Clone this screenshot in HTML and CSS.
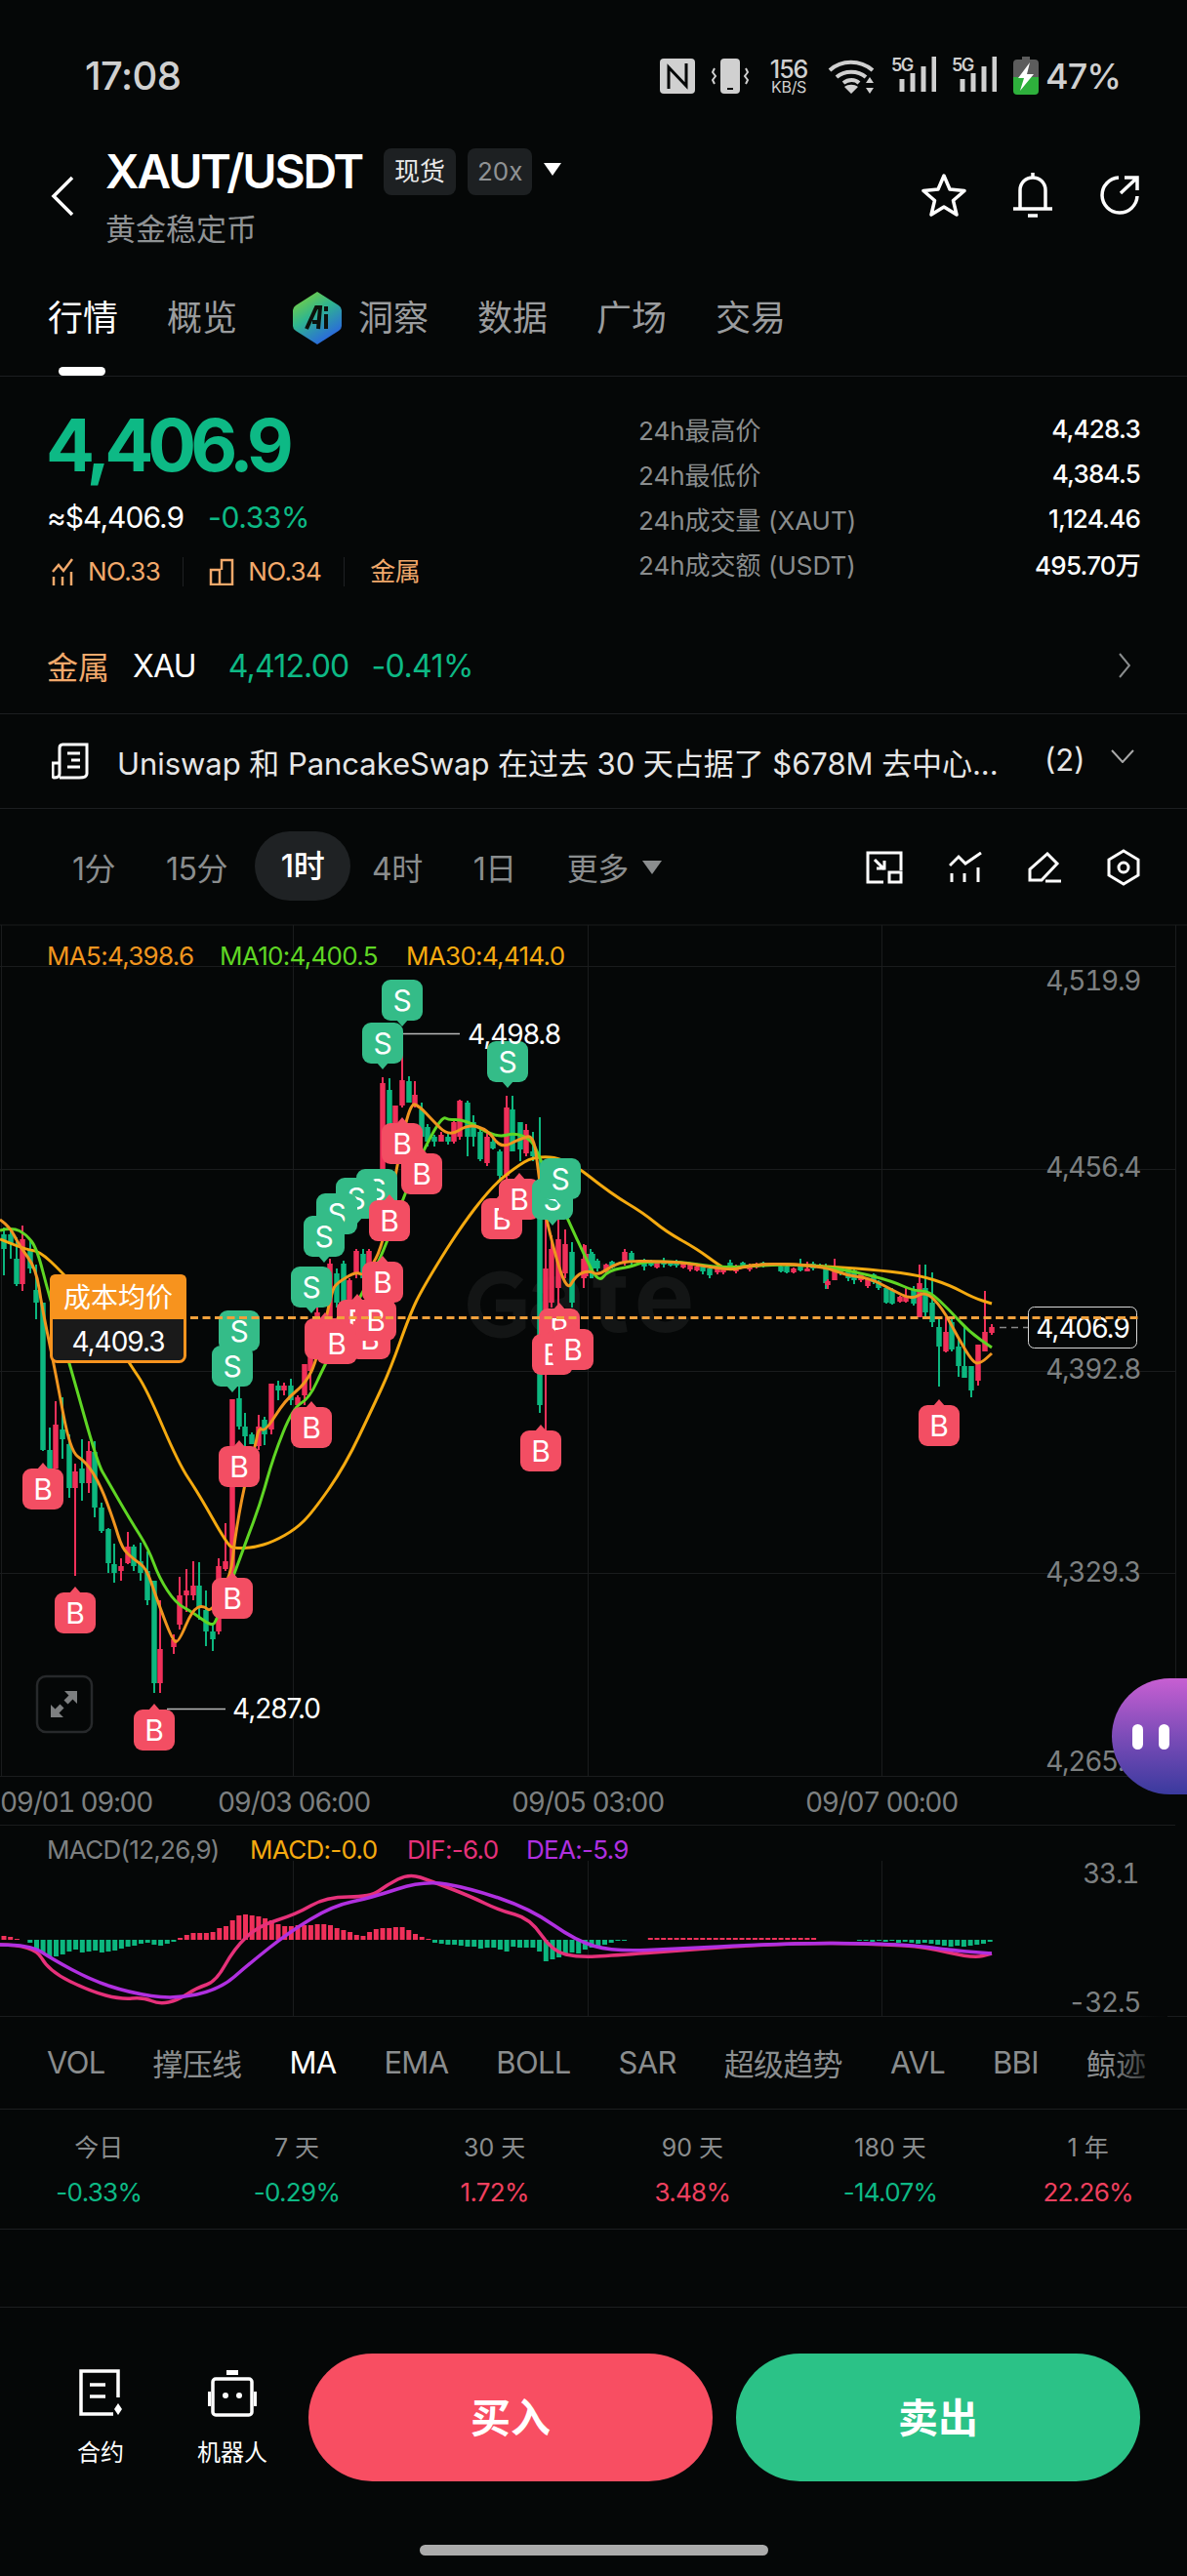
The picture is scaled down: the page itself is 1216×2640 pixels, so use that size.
FILE: index.html
```html
<!DOCTYPE html>
<html lang="zh">
<head>
    <meta charset="UTF-8">
    <title>XAUT/USDT</title>
    <link rel="stylesheet" href="styles.css">
</head>
<body>
<div class="page">

    <!-- status bar -->
    <div class="status">
        <span class="time">17:08</span>
        <div class="sys">
            <svg class="ic-nfc" width="36" height="36" viewBox="0 0 36 36"><rect width="36" height="36" rx="4" fill="#d0d0d0"/><path d="M9 31V9l18 19V5" fill="none" stroke="#050707" stroke-width="3"/></svg>
            <svg class="ic-vib" width="38" height="36" viewBox="0 0 38 36"><rect x="9" width="20" height="36" rx="4" fill="#d0d0d0"/><rect x="16" y="30" width="6" height="2" fill="#050707"/><path d="M3 10l-2 4 3 4-3 4 2 4M35 10l2 4-3 4 3 4-2 4" fill="none" stroke="#d0d0d0" stroke-width="2"/></svg>
            <div class="speed"><b>156</b><i>KB/S</i></div>
            <svg class="ic-wifi" width="50" height="36" viewBox="0 0 50 36"><path d="M2 12C14 1 33 1 46 12M9 19c8-7 22-7 30 0M16 25c5-4 12-4 16 0" fill="none" stroke="#d0d0d0" stroke-width="4"/><path d="M24 36l-7-7c4-3 10-3 14 0zM43 19l4 6h-8zM43 36l4-6h-8z" fill="#d0d0d0"/></svg>
            <div class="sig"><em>5G</em><svg width="46" height="36" viewBox="0 0 46 36"><path d="M11 36V23M22 36V17M33 36V10M44 36V0" stroke="#d0d0d0" stroke-width="5"/></svg></div>
            <div class="sig"><em>5G</em><svg width="46" height="36" viewBox="0 0 46 36"><path d="M11 36V23M22 36V17M33 36V10M44 36V0" stroke="#d0d0d0" stroke-width="5"/></svg></div>
            <svg class="ic-bat" width="26" height="39" viewBox="0 0 26 39"><path d="M9 0h8v3h5q4 0 4 4v14H0V7q0-4 4-4h5z" fill="#5c5c5c"/><path d="M0 21h26v14q0 4-4 4H4q-4 0-4-4z" fill="#2eb03c"/><path d="M17 6L5 22h6l-4 13 14-17h-7z" fill="#fff"/></svg>
            <span class="pct">47%</span>
        </div>
    </div>

    <!-- header -->
    <div class="head">
        <svg class="back" width="24" height="42" viewBox="0 0 24 42"><path d="M22 2L3 21l19 19" fill="none" stroke="#fff" stroke-width="3.5"/></svg>
        <div class="pair">
            <div class="pair-top">
                <span class="pair-name">XAUT/USDT</span>
                <span class="tag tag-w">现货</span>
                <span class="tag">20x</span>
                <span class="caret"></span>
            </div>
            <div class="pair-sub">黄金稳定币</div>
        </div>
        <div class="head-btns">
            <svg width="46" height="46" viewBox="0 0 46 46"><path d="M23 3l6 14 15 1.500-11.500 10L36 43l-13-8-13 8 3.500-14.500L2 18.500 17 17z" fill="none" stroke="#fff" stroke-width="3.500" stroke-linejoin="round"/></svg>
            <svg width="40" height="46" viewBox="0 0 40 46"><path d="M20 0v5M7 37V18C7 10 13 5 20 5s13 5 13 13v19M0 37h40M15 44h10" fill="none" stroke="#fff" stroke-width="3.500"/></svg>
            <svg width="42" height="42" viewBox="0 0 42 42"><path d="M20 3A18 18 0 1 0 39 22M22 19L38 4M26 3h13v13" fill="none" stroke="#fff" stroke-width="3.500"/></svg>
        </div>
    </div>

    <!-- tabs -->
    <div class="tabs">
        <span class="tab tab-on">行情</span>
        <span class="tab">概览</span>
        <span class="tab tab-ai">
            <svg width="50" height="54" viewBox="0 0 50 54"><defs><linearGradient id="aig" x1="0" y1="0" x2="0.6" y2="1"><stop offset="0" stop-color="#8bd62e"/><stop offset="0.5" stop-color="#2fb58f"/><stop offset="1" stop-color="#2a66e0"/></linearGradient></defs><path d="M25 0l22 14q3 2 3 5v16q0 3-3 5L25 54 3 40q-3-2-3-5V19q0-3 3-5z" fill="url(#aig)"/><path d="M14 38l10-22h4l-2 22M20 31h7" fill="none" stroke="#0c120c" stroke-width="4"/><rect x="32" y="15" width="4" height="5" fill="#0c120c"/><rect x="32" y="23" width="4" height="15" fill="#0c120c"/></svg>
            洞察
        </span>
        <span class="tab">数据</span>
        <span class="tab">广场</span>
        <span class="tab">交易</span>
    </div>

    <!-- quote -->
    <div class="quote">
        <div class="quote-l">
            <div class="price">4,406.9</div>
            <div class="price-sub"><span class="usd">≈$4,406.9</span><span class="chg">-0.33%</span></div>
            <div class="ranks">
                <svg width="24" height="28" viewBox="0 0 24 28"><path d="M2 14l6-7 5 6 9-12M3 19v9M12 19v9M21 14v14" fill="none" stroke="#f2a96b" stroke-width="2.500"/></svg>
                <span class="rank">NO.33</span>
                <i class="rank-sep"></i>
                <svg width="26" height="28" viewBox="0 0 26 28"><path d="M2 27V12h9V27H2zM11 27h13V2H13v10" fill="none" stroke="#f2a96b" stroke-width="2.500"/></svg>
                <span class="rank">NO.34</span>
                <i class="rank-sep"></i>
                <span class="rank">金属</span>
            </div>
        </div>
        <div class="stats">
            <div class="stat"><span>24h最高价</span><b>4,428.3</b></div>
            <div class="stat"><span>24h最低价</span><b>4,384.5</b></div>
            <div class="stat"><span>24h成交量 (XAUT)</span><b>1,124.46</b></div>
            <div class="stat"><span>24h成交额 (USDT)</span><b>495.70万</b></div>
        </div>
    </div>

    <div class="metal">
        <span class="metal-k">金属</span>
        <span class="metal-n">XAU</span>
        <span class="metal-p">4,412.00</span>
        <span class="metal-c">-0.41%</span>
        <svg class="metal-go" width="12" height="26" viewBox="0 0 12 26"><path d="M1 1l10 12L1 25" fill="none" stroke="#8a8d8e" stroke-width="2"/></svg>
    </div>

    <div class="news">
        <svg width="38" height="38" viewBox="0 0 38 38"><path d="M2 36c-1 0-1-2-1-3V21h7M8 36h20q8 0 8-4V2H11Q8 2 8 6v26q0 4-6 4M16 11h13M20 18h9M16 25h13" fill="none" stroke="#fff" stroke-width="3"/></svg>
        <span class="news-t">Uniswap 和 PancakeSwap 在过去 30 天占据了 $678M 去中心...</span>
        <span class="news-n">(2)</span>
        <svg class="news-more" width="24" height="14" viewBox="0 0 24 14"><path d="M1 1l11 12L23 1" fill="none" stroke="#a8a8a8" stroke-width="2"/></svg>
    </div>

    <!-- intervals -->
    <div class="bar">
        <span class="iv">1分</span>
        <span class="iv">15分</span>
        <span class="iv iv-on">1时</span>
        <span class="iv">4时</span>
        <span class="iv">1日</span>
        <span class="iv iv-more">更多<i class="caret caret-g"></i></span>
        <div class="tools">
            <svg width="38" height="34" viewBox="0 0 38 34"><path d="M18 32H2V2h34v18M9 9l10 10M11 18h8v-8" fill="none" stroke="#fff" stroke-width="3"/><rect x="24" y="22" width="12" height="10" fill="none" stroke="#fff" stroke-width="3"/></svg>
            <svg width="34" height="32" viewBox="0 0 34 32"><path d="M1 14l9-9 7 7L33 1M3 22v9M16 22v9M30 16v15" fill="none" stroke="#fff" stroke-width="3"/></svg>
            <svg width="34" height="32" viewBox="0 0 34 32"><path d="M2 29V18L20 2l10 10-16 17zM18 30h16" fill="none" stroke="#fff" stroke-width="3"/></svg>
            <svg width="34" height="38" viewBox="0 0 34 38"><path d="M17 2l15 9v16l-15 9-15-9V11z" fill="none" stroke="#fff" stroke-width="3"/><circle cx="17" cy="19" r="5" fill="none" stroke="#fff" stroke-width="3"/></svg>
        </div>
    </div>

    <!-- chart: a free canvas, drawn in page coordinates -->
    <div class="chart">
        <svg class="chart-svg" width="1216" height="1118" viewBox="0 948 1216 1118">
            <path class="grid" d="M0 948H1216M0 990.500H1204M0 1198.500H1204M0 1405.500H1204M0 1612.500H1204M0 1820.500H1204M0 1870.500H1204M0 2066.500H1216M1.500 948V1820M300.500 948V1820M602.500 948V1820M903.500 948V1820M1204.500 948V1820M300.500 1907V2066M602.500 1907V2066M903.500 1907V2066"/>

            <!-- watermark -->
            <path d="M532 1316a28 28 0 1 0 0 42V1338H508" fill="none" stroke="#131515" stroke-width="13"/>
            <text class="wm" x="540" y="1365">ate</text>

            <g id="candles"></g>

            <polyline class="ln ma30" points="0,1270 27,1281 40,1282 63,1303 100,1345 133,1398 150,1423 183,1500 203,1530 233,1583 240,1587 260,1586 280,1580 303,1567 320,1550 353,1503 383,1440 400,1403 420,1347 433,1320 470,1260 503,1217 527,1197 547,1185 580,1187 627,1224 659,1243 682,1262 714,1280 737,1297 747,1302 765,1297 796,1295 851,1298 903,1302 942,1307 973,1317 997,1330 1016,1336"/>
            <polyline class="ln ma10" points="0,1261 13,1258 27,1265 38,1280 50,1327 72,1400 100,1500 110,1517 133,1557 152,1587 163,1617 180,1643 197,1652 217,1667 222,1660 240,1613 252,1580 267,1540 280,1493 300,1443 317,1433 332,1400 372,1323 390,1290 415,1223 433,1180 453,1144 460,1148 470,1147 485,1152 497,1160 513,1165 527,1161 545,1168 553,1187 582,1250 597,1283 613,1315 623,1302 647,1298 659,1293 698,1293 734,1299 765,1298 796,1296 836,1297 875,1303 914,1313 936,1323 952,1323 973,1343 993,1365 1016,1381"/>
            <polyline class="ln ma5" points="0,1250 10,1257 20,1277 37,1300 43,1340 57,1407 72,1488 88,1498 103,1522 117,1560 125,1587 137,1598 150,1607 160,1637 177,1682 183,1683 197,1650 208,1645 217,1653 237,1613 240,1580 250,1523 262,1480 265,1463 272,1467 292,1435 313,1418 325,1393 340,1323 345,1315 365,1303 373,1308 392,1280 407,1193 420,1130 430,1134 442,1147 460,1165 480,1152 500,1158 513,1177 533,1167 547,1163 552,1207 560,1253 580,1325 590,1307 603,1302 613,1307 627,1297 643,1292 679,1293 702,1294 747,1302 769,1297 796,1295 844,1298 867,1307 891,1310 914,1322 934,1332 948,1323 965,1340 981,1370 997,1397 1005,1397 1016,1387"/>

            <g id="badges"></g>

            <!-- high / low marks -->
            <path class="mark" d="M413 1059.500H471M171 1751.500H231"/>
            <text class="t-white" x="479" y="1070">4,498.8</text>
            <text class="t-white" x="238" y="1761">4,287.0</text>

            <text class="t-leg c-ma5" x="48" y="989">MA5:4,398.6</text>
            <text class="t-leg c-ma10" x="225" y="989">MA10:4,400.5</text>
            <text class="t-leg c-ma30" x="416" y="989">MA30:4,414.0</text>

            <text class="t-axis ax-r" x="1168" y="1015">4,519.9</text>
            <text class="t-axis ax-r" x="1168" y="1206">4,456.4</text>
            <text class="t-axis ax-r" x="1168" y="1413">4,392.8</text>
            <text class="t-axis ax-r" x="1168" y="1621">4,329.3</text>
            <text class="t-axis ax-r" x="1168" y="1815">4,265.7</text>

            <text class="t-axis" x="0" y="1857">09/01 09:00</text>
            <text class="t-axis ax-m" x="301" y="1857">09/03 06:00</text>
            <text class="t-axis ax-m" x="602" y="1857">09/05 03:00</text>
            <text class="t-axis ax-m" x="903" y="1857">09/07 00:00</text>

            <!-- current price -->
            <path class="now-dash" d="M1024 1360.500H1053"/>
            <rect class="now-box" x="1053.500" y="1339.500" width="111" height="42" rx="6"/>
            <text class="t-white ax-m" x="1109" y="1371">4,406.9</text>

            <!-- cost line and tag -->
            <path class="cost-line" d="M195 1350.500H1168"/>
            <rect class="cost-body" x="52.500" y="1307.500" width="137" height="88" rx="6"/>
            <path class="cost-top" d="M57 1306H185q6 0 6 6v40H51V1312q0-6 6-6z"/>
            <text class="t-cost ax-m" x="121" y="1340">成本均价</text>
            <text class="t-white ax-m" x="121" y="1385">4,409.3</text>

            <!-- expand -->
            <rect class="expand" x="38" y="1718" width="56" height="57" rx="9"/>
            <path d="M79 1733v13l-4.500-4.500-5 5-4-4 5-5-4.500-4.500zM52 1760v-13l4.500 4.500 5-5 4 4-5 5 4.500 4.500z" fill="#7d7f80"/>

            <!-- macd -->
            <text class="t-leg c-gray" x="48" y="1905">MACD(12,26,9)</text>
            <text class="t-leg c-ma30" x="256" y="1905">MACD:-0.0</text>
            <text class="t-leg c-dif" x="417" y="1905">DIF:-6.0</text>
            <text class="t-leg c-dea" x="539" y="1905">DEA:-5.9</text>
            <text class="t-axis ax-r" x="1166" y="1930">33.1</text>
            <text class="t-axis ax-r" x="1168" y="2062">-32.5</text>
            <path id="histUp" class="hist-up"/>
            <path id="histDn" class="hist-dn"/>
            <polyline class="ln ln-m dif" points="0,1993 35,1993 50,2020 93,2041 124,2049 147,2047 163,2054 182,2050 202,2037 221,2031 240,1997 264,1974 303,1962 334,1944 380,1944 396,1932 419,1920 442,1928 481,1943 512,1958 543,1966 566,2000 593,2006 628,2004 698,1999 776,1993 853,1991 908,1993 946,1995 997,2007 1016,2002"/>
            <polyline class="ln ln-m dea" points="0,1993 31,1993 54,2008 93,2029 132,2042 178,2049 225,2039 256,2012 295,1981 341,1953 380,1945 434,1927 481,1935 543,1956 590,1989 628,2000 698,1997 776,1993 853,1991 931,1993 978,1999 1016,2002"/>
        </svg>
        <div class="bot-btn"><i></i><i></i></div>
    </div>

    <!-- indicators -->
    <div class="inds">
        <span>VOL</span><span>撑压线</span><span class="ind-on">MA</span><span>EMA</span><span>BOLL</span><span>SAR</span><span>超级趋势</span><span>AVL</span><span>BBI</span><span>鲸迹</span>
        <i class="inds-fade"></i>
    </div>

    <!-- periods -->
    <div class="periods">
        <div class="per"><span>今日</span><b class="dn">-0.33%</b></div>
        <div class="per"><span>7 天</span><b class="dn">-0.29%</b></div>
        <div class="per"><span>30 天</span><b class="up">1.72%</b></div>
        <div class="per"><span>90 天</span><b class="up">3.48%</b></div>
        <div class="per"><span>180 天</span><b class="dn">-14.07%</b></div>
        <div class="per"><span>1 年</span><b class="up">22.26%</b></div>
    </div>

    <div class="gap"></div>

    <!-- footer -->
    <div class="foot">
        <div class="foot-main">
            <div class="fbtn fbtn-a">
                <svg width="46" height="50" viewBox="0 0 46 50"><path d="M41 30V3H3v44h33M12 17h16M12 29h16" fill="none" stroke="#fff" stroke-width="3.500"/><path d="M41 36l4 6-4 6-4-6z" fill="#fff"/></svg>
                <span>合约</span>
            </div>
            <div class="fbtn fbtn-b">
                <svg width="50" height="50" viewBox="0 0 50 50"><rect x="5" y="11" width="40" height="37" rx="3" fill="none" stroke="#fff" stroke-width="3.500"/><path d="M19 2h12v5H19zM0 24h3v15H0zM47 24h3v15h-3z" fill="#fff"/><circle cx="18" cy="28" r="3" fill="#fff"/><circle cx="32" cy="28" r="3" fill="#fff"/></svg>
                <span>机器人</span>
            </div>
            <div class="trade trade-buy">买入</div>
            <div class="trade trade-sell">卖出</div>
        </div>
        <div class="home"></div>
    </div>

</div>
<script src="chart.js"></script>
</body>
</html>
```

FILE: styles.css
```css
* {
    margin: 0;
    padding: 0;
    box-sizing: border-box;
    font-style: normal;
}

html, body {
    background: #050707;
}

body {
    width: 1216px;
    height: 2640px;
    overflow: hidden;
    font-family: Inter, "Noto Sans CJK SC", sans-serif;
    color: #fff;
}

.page {
    width: 1216px;
    height: 2640px;
}

/* status bar */
.status {
    height: 140px;
    padding: 58px 68px 0 87px;
    display: flex;
    justify-content: space-between;
    align-items: flex-start;
    color: #d0d0d0;
}

.time {
    font-size: 40px;
    line-height: 40px;
    font-weight: 500;
    letter-spacing: -0.6px;
}

.sys {
    display: flex;
    align-items: center;
    height: 40px;
}

.ic-vib {
    margin-left: 17px;
}

.speed {
    margin-left: 18px;
    width: 46px;
    display: flex;
    flex-direction: column;
    align-items: center;
}

.speed b {
    font-size: 25px;
    line-height: 22px;
    font-weight: 500;
    letter-spacing: -1px;
}

.speed i {
    font-size: 16px;
    line-height: 15px;
    letter-spacing: -0.3px;
}

.ic-wifi {
    margin-left: 17px;
}

.sig {
    margin-left: 15px;
    position: relative;
    width: 48px;
}

.sig + .sig {
    margin-left: 14px;
}

.sig em {
    position: absolute;
    left: 0;
    top: 0;
    font-size: 18px;
    line-height: 17px;
    font-weight: 600;
    letter-spacing: -1.5px;
}

.ic-bat {
    margin-left: 15px;
    margin-top: -2px;
}

.pct {
    margin-left: 7px;
    font-size: 36px;
    line-height: 40px;
    font-weight: 500;
    letter-spacing: -1px;
}

/* header */
.head {
    height: 124px;
    position: relative;
    display: flex;
    padding-left: 52px;
}

.back {
    margin-top: 40px;
}

.pair {
    margin-left: 32px;
}

.pair-top {
    display: flex;
    align-items: center;
    height: 72px;
}

.pair-name {
    font-size: 48px;
    line-height: 72px;
    font-weight: 600;
    letter-spacing: -2.2px;
}

.tag {
    margin-left: 12px;
    height: 48px;
    padding: 0 10px;
    border-radius: 8px;
    background: #1d2022;
    color: #8f9294;
    font-size: 26px;
    line-height: 48px;
}

.pair-name + .tag {
    margin-left: 22px;
}

.tag-w {
    padding: 0 11px;
    color: #e8e8e8;
}

.caret {
    display: block;
    margin-left: 12px;
    margin-top: -6px;
    border-top: 13px solid #fff;
    border-left: 9px solid transparent;
    border-right: 9px solid transparent;
}

.pair-sub {
    margin-top: 3px;
    font-size: 31px;
    line-height: 40px;
    color: #8f9294;
}

.head-btns {
    position: absolute;
    right: 48px;
    top: 37px;
    display: flex;
    align-items: center;
    gap: 48px;
}

/* tabs */
.tabs {
    height: 122px;
    padding: 35px 0 0 49px;
    display: flex;
    align-items: flex-start;
    gap: 50px;
    border-bottom: 1px solid #1c1e20;
}

.tab {
    position: relative;
    font-size: 36px;
    line-height: 54px;
    color: #9a9c9e;
    white-space: nowrap;
}

.tab-on {
    color: #fff;
}

.tab-on::after {
    content: "";
    position: absolute;
    left: 11px;
    top: 77px;
    width: 48px;
    height: 9px;
    border-radius: 5px;
    background: #fff;
}

.tab-ai {
    display: flex;
    align-items: center;
    gap: 17px;
    margin-left: 7px;
}

/* quote */
.quote {
    height: 251px;
    position: relative;
    padding: 0 48px;
    display: flex;
    justify-content: space-between;
}

.price {
    margin: 27px 0 0 -1px;
    font-size: 74px;
    line-height: 86px;
    font-weight: 700;
    letter-spacing: -6px;
    color: #0db985;
}

.price-sub {
    margin-top: 11px;
    display: flex;
    gap: 25px;
    font-size: 30px;
    line-height: 40px;
}

.usd {
    letter-spacing: -1px;
}

.chg {
    color: #0db985;
    letter-spacing: -0.4px;
}

.ranks {
    margin-top: 18px;
    padding-left: 4px;
    display: flex;
    align-items: center;
    height: 36px;
}

.rank {
    margin-left: 14px;
    font-size: 26px;
    line-height: 36px;
    letter-spacing: -0.6px;
    color: #f2a96b;
}

.rank-sep {
    width: 1px;
    height: 30px;
    margin: 0 26px 0 23px;
    background: #1f2123;
}

.rank-sep + .rank {
    margin-left: 0;
}

.stats {
    width: 514px;
    padding-top: 30px;
}

.stat {
    height: 46px;
    display: flex;
    justify-content: space-between;
    align-items: center;
    font-size: 26px;
}

.stat span {
    color: #8a8d8e;
}

.stat b {
    font-weight: 500;
    letter-spacing: -0.8px;
}

/* metal row */
.metal {
    height: 95px;
    padding: 0 58px 4px 48px;
    display: flex;
    align-items: center;
    font-size: 32px;
    border-bottom: 1px solid #1c1e20;
}

.metal-k {
    color: #f2a96b;
}

.metal-n {
    margin-left: 24px;
    letter-spacing: -0.8px;
}

.metal-p {
    margin-left: 33px;
    color: #0db985;
    letter-spacing: -0.8px;
}

.metal-c {
    margin-left: 23px;
    color: #0db985;
    letter-spacing: -0.6px;
}

.metal-go {
    margin-left: auto;
}

/* news row */
.news {
    height: 97px;
    padding: 0 0 0 53px;
    display: flex;
    align-items: center;
    border-bottom: 1px solid #1c1e20;
    font-size: 31px;
}

.news-t {
    margin-left: 29px;
    width: 920px;
    white-space: nowrap;
    overflow: hidden;
    color: #e6e6e6;
    letter-spacing: -0.05px;
}

.news-n {
    margin: -4px 0 0 30px;
    width: 68px;
    color: #e6e6e6;
}

.news-more {
    margin-top: -10px;
}

/* interval bar */
.bar {
    height: 119px;
    position: relative;
    display: flex;
    align-items: center;
    padding: 0 0 2px 74px;
    font-size: 32px;
    color: #8a8d8e;
}

.iv {
    letter-spacing: -0.5px;
    margin-right: 52px;
}

.iv-on {
    margin: 0 22px 0 -24px;
    width: 98px;
    height: 71px;
    line-height: 71px;
    text-align: center;
    border-radius: 36px;
    background: #1f2224;
    color: #fff;
    font-weight: 500;
}

.iv-more {
    display: flex;
    align-items: center;
}

.caret-g {
    margin-left: 14px;
    margin-top: 2px;
    border-top: 14px solid #8a8d8e;
    border-left: 10px solid transparent;
    border-right: 10px solid transparent;
}

.tools {
    position: absolute;
    top: 41px;
    left: 887px;
    display: flex;
    align-items: center;
    gap: 47px;
}

/* chart */
.chart {
    height: 1118px;
    position: relative;
}

.chart-svg {
    display: block;
    overflow: visible;
    font-family: Inter, "Noto Sans CJK SC", sans-serif;
}

.grid {
    fill: none;
    stroke: #1a1c1d;
    stroke-width: 1;
}

.wm {
    font-size: 104px;
    font-weight: 700;
    fill: #131515;
    letter-spacing: 6px;
}

.ln {
    fill: none;
    stroke-width: 3;
    stroke-linejoin: round;
}

.ln-m {
    stroke-width: 3.5;
}

.ma5 {
    stroke: #f0951f;
}

.ma10 {
    stroke: #5fd624;
}

.ma30 {
    stroke: #f5aa10;
}

.dif {
    stroke: #e6317a;
}

.dea {
    stroke: #b030e0;
}

.mark {
    fill: none;
    stroke: #b8b8b8;
    stroke-width: 1.500;
}

.t-white {
    font-size: 28px;
    fill: #fff;
    letter-spacing: -1px;
}

.t-leg {
    font-size: 26px;
    letter-spacing: -0.7px;
}

.t-axis {
    font-size: 28px;
    fill: #7d8081;
    font-variant-numeric: tabular-nums;
    letter-spacing: -1.3px;
}

.ax-r {
    text-anchor: end;
}

.ax-m {
    text-anchor: middle;
}

.c-ma5 {
    fill: #f0951f;
}

.c-ma10 {
    fill: #5fd624;
}

.c-ma30 {
    fill: #f5aa10;
}

.c-gray {
    fill: #7d8081;
}

.c-dif {
    fill: #e6317a;
}

.c-dea {
    fill: #b030e0;
}

.bdg-s {
    fill: #34bc88;
}

.bdg-b {
    fill: #f34e63;
}

.bdg-t {
    font-size: 30px;
    fill: #fff;
    text-anchor: middle;
}

.now-dash {
    stroke: #888;
    stroke-width: 1.500;
    stroke-dasharray: 7 5;
}

.now-box {
    fill: #050707;
    stroke: #d8d8d8;
    stroke-width: 1;
}

.cost-line {
    stroke: #f0a03c;
    stroke-width: 3;
    stroke-dasharray: 8 4.500;
}

.cost-body {
    fill: #1a1a1a;
    stroke: #f7931e;
    stroke-width: 3;
}

.cost-top {
    fill: #f7931e;
}

.t-cost {
    font-size: 28px;
    fill: #fff;
}

.expand {
    fill: none;
    stroke: #27292b;
    stroke-width: 2.500;
}

.hist-up {
    fill: none;
    stroke: #f0305a;
    stroke-width: 5;
}

.hist-dn {
    fill: none;
    stroke: #0cb77f;
    stroke-width: 5;
}

.bot-btn {
    position: absolute;
    right: 0;
    top: 772px;
    width: 77px;
    height: 119px;
    border-radius: 60px 0 0 60px / 60px 0 0 60px;
    background: linear-gradient(#c75fd2, #7c4cb8 50%, #3a3a9e);
    display: flex;
    justify-content: center;
    align-items: center;
    gap: 16px;
    padding-left: 3px;
}

.bot-btn i {
    width: 11px;
    height: 26px;
    border-radius: 6px;
    background: #fff;
}

/* indicators */
.inds {
    height: 96px;
    position: relative;
    padding: 0 0 0 48px;
    display: flex;
    align-items: center;
    gap: 49px;
    font-size: 31px;
    color: #8a8d8e;
    border-bottom: 1px solid #1c1e20;
    white-space: nowrap;
    overflow: hidden;
}

.inds span {
    letter-spacing: -0.7px;
}

.ind-on {
    color: #fff;
}

.inds-fade {
    position: absolute;
    right: 20px;
    top: 0;
    width: 60px;
    height: 95px;
    background: linear-gradient(90deg, rgba(5, 7, 7, 0), #050707);
}

/* periods */
.periods {
    height: 123px;
    display: grid;
    grid-template-columns: repeat(6, 1fr);
    border-bottom: 1px solid #1c1e20;
    padding-top: 21px;
}

.per {
    display: flex;
    flex-direction: column;
    align-items: center;
    gap: 10px;
    font-size: 25px;
    line-height: 36px;
}

.per span {
    color: #8a8d8e;
}

.per b {
    font-size: 26px;
    font-weight: 400;
    letter-spacing: -0.7px;
}

.dn {
    color: #0db985;
}

.up {
    color: #f0405f;
}

.gap {
    height: 80px;
    border-bottom: 1px solid #1c1e20;
}

/* footer */
.foot {
    height: 275px;
}

.foot-main {
    height: 179px;
    padding: 47px 48px 0 0;
    display: flex;
    align-items: flex-start;
}

.fbtn {
    display: flex;
    flex-direction: column;
    align-items: center;
    gap: 20px;
    font-size: 24px;
    line-height: 34px;
    margin-top: 15px;
}

.fbtn-a {
    width: 80px;
    margin-left: 63px;
}

.fbtn-b {
    width: 90px;
    margin-left: 50px;
    margin-right: 33px;
}

.trade {
    width: 414px;
    height: 131px;
    border-radius: 66px;
    text-align: center;
    font-size: 41px;
    line-height: 133px;
    font-weight: 700;
}

.trade-buy {
    background: #f84e62;
}

.trade-sell {
    margin-left: 24px;
    background: #2bc287;
}

.home {
    width: 357px;
    height: 11px;
    margin: 64px auto 0;
    border-radius: 6px;
    background: #ababab;
}
```

FILE: chart.js
```js
/* 蜡烛: [x, 影线上, 影线下, 实体上, 实体下] (page coordinates) */
var greens = [
    [4,1258,1307,1265,1280],[11,1262,1290,1265,1275],[17,1268,1318,1290,1316],[31,1270,1305,1280,1300],
    [37,1296,1352,1322,1335],[44,1335,1487,1335,1486],[51,1463,1510,1486,1505],[64,1432,1495,1465,1475],
    [71,1470,1535,1480,1525],[84,1475,1538,1505,1520],[97,1477,1555,1488,1545],[104,1540,1571,1545,1569],
    [111,1566,1612,1567,1602],[117,1582,1622,1603,1612],[137,1583,1610,1585,1605],[144,1581,1620,1600,1612],
    [151,1590,1645,1610,1640],[158,1620,1735,1620,1725],[204,1601,1660,1625,1648],[211,1630,1687,1650,1672],
    [218,1665,1692,1672,1680],[245,1420,1465,1433,1462],[251,1448,1482,1462,1472],[258,1468,1480,1470,1480],
    [271,1452,1481,1455,1470],[285,1415,1435,1420,1425],[298,1413,1440,1420,1435],[345,1300,1340,1305,1335],
    [352,1292,1340,1295,1335],[372,1280,1320,1285,1310],[399,1105,1180,1117,1170],[419,1103,1130,1108,1130],
    [432,1130,1165,1137,1165],[438,1152,1175,1155,1170],[445,1163,1175,1165,1170],[459,1160,1173,1165,1170],
    [479,1128,1185,1130,1165],[485,1143,1175,1150,1165],[492,1155,1190,1160,1188],[505,1165,1178,1170,1177],
    [512,1178,1210,1180,1205],[525,1123,1180,1137,1180],[533,1150,1190,1150,1178],[546,1160,1190,1180,1185],
    [553,1145,1448,1245,1440],[586,1273,1340,1283,1335],[605,1280,1310,1285,1305],[612,1290,1303,1292,1300],
    [607,1283,1310,1285,1300],[627,1292,1300,1293,1299],[647,1282,1296,1284,1294],[660,1290,1302,1293,1298],
    [667,1291,1298,1292,1297],[680,1289,1299,1292,1296],[687,1292,1298,1293,1297],[693,1291,1299,1293,1297],
    [720,1297,1306,1298,1303],[727,1299,1310,1300,1307],[748,1291,1302,1294,1300],[761,1293,1300,1294,1299],
    [782,1293,1299,1294,1298],[800,1297,1304,1298,1303],[806,1297,1305,1298,1304],[820,1290,1303,1296,1302],
    [833,1293,1302,1295,1300],[840,1295,1299,1296,1298],[846,1295,1321,1300,1315],[861,1298,1307,1299,1305],
    [869,1298,1313,1300,1310],[875,1300,1316,1302,1312],[895,1305,1316,1306,1314],[900,1312,1322,1313,1320],
    [908,1318,1336,1320,1335],[914,1320,1337,1322,1336],[936,1318,1338,1322,1336],[948,1296,1352,1320,1345],
    [955,1304,1360,1335,1355],[962,1350,1421,1360,1380],[975,1350,1385,1355,1383],[982,1370,1411,1380,1400],
    [988,1360,1412,1400,1412],[995,1400,1432,1400,1425]
];
var reds = [
    [23,1256,1323,1270,1316],[57,1436,1505,1460,1505],[77,1500,1615,1508,1525],[91,1477,1530,1487,1520],
    [124,1597,1620,1605,1610],[131,1570,1603,1585,1602],[164,1640,1735,1690,1725],[178,1675,1695,1680,1688],
    [184,1616,1670,1635,1665],[191,1608,1652,1630,1635],[198,1600,1640,1625,1635],[224,1597,1675,1605,1672],
    [231,1561,1610,1600,1608],[238,1434,1640,1434,1620],[265,1450,1486,1462,1482],[278,1418,1470,1418,1465],
    [291,1417,1430,1420,1425],[305,1430,1442,1432,1440],[312,1398,1440,1398,1430],[318,1380,1425,1390,1405],
    [325,1340,1370,1345,1365],[338,1290,1360,1295,1355],[358,1310,1340,1312,1335],[365,1280,1310,1282,1305],
    [378,1280,1300,1282,1298],[392,1104,1230,1110,1230],[405,1133,1190,1133,1190],[412,1080,1135,1107,1133],
    [425,1108,1135,1122,1133],[452,1160,1170,1163,1170],[465,1148,1172,1150,1170],[471,1127,1168,1128,1165],
    [499,1160,1195,1165,1192],[519,1123,1210,1135,1205],[539,1152,1185,1158,1182],[559,1240,1480,1300,1400],
    [565,1266,1340,1280,1335],[572,1250,1340,1270,1320],[579,1260,1310,1275,1305],[598,1275,1320,1290,1310],
    [600,1276,1310,1285,1308],[621,1295,1305,1296,1303],[640,1280,1297,1283,1293],[673,1292,1300,1294,1299],
    [700,1294,1300,1295,1299],[707,1295,1303,1296,1301],[714,1297,1303,1298,1302],[735,1298,1306,1299,1304],
    [741,1298,1306,1299,1304],[754,1296,1305,1297,1303],[768,1295,1303,1296,1301],[775,1294,1300,1295,1299],
    [813,1299,1305,1300,1304],[827,1293,1303,1300,1303],[848,1311,1321,1313,1317],[855,1290,1312,1300,1312],
    [882,1305,1314,1306,1312],[889,1310,1320,1311,1318],[922,1328,1335,1329,1334],[928,1320,1335,1328,1334],
    [942,1296,1350,1315,1350],[969,1350,1386,1365,1385],[1002,1378,1420,1378,1415],[1009,1323,1385,1365,1385],
    [1016,1357,1368,1360,1366]
];

/* 买卖点 draw order matters, later ones sit on top */
var badges = [
    ["S",412,1025],["S",392,1069],["S",520,1088],["B",412,1172],["B",432,1203],["S",386,1219],["S",365,1228],
    ["S",345,1244],["S",332,1267],["B",399,1251],["S",319,1319],["B",392,1314],["B",333,1372],["B",379,1372],
    ["B",366,1353],["B",345,1377],["B",385,1353],["S",245,1364],["S",238,1400],["B",319,1463],["B",245,1503],
    ["B",44,1526],["B",77,1653],["B",238,1638],["B",158,1773],["B",514,1249],["B",532,1229],["S",566,1229],
    ["S",574,1208],["B",573,1362],["B",566,1388],["B",587,1383],["B",554,1487],["B",962,1461]
];

/* MACD 柱 */
var hist = [4,3,1,0,-3,-10,-13,-18,-17,-15,-12,-10,-13,-12,-11,-13,-12,-11,-9,-7,-6,-4,-3,-5,-6,-4,-2,
    2,5,7,7,7,8,12,14,20,25,26,25,24,22,20,16,14,14,15,15,15,16,16,15,12,10,8,5,4,8,11,12,12,13,13,10,6,3,1,
    -3,-4,-5,-5,-6,-7,-7,-9,-8,-8,-10,-12,-7,-8,-8,-8,-12,-22,-20,-18,-14,-13,-14,-10,-8,-7,-5,-3,-1,-1,
    0,0,0,2,2,2,2,2,2,2,2,2,2,2,2,2,2,2,2,2,2,2,2,2,2,2,2,2,2,0,0,0,0,0,0,
    -1,-1,-2,-1,-2,-1,-3,-2,-3,-4,-3,-4,-5,-6,-7,-6,-7,-6,-5,-4,-2];

var NS = "http://www.w3.org/2000/svg";

function make(tag, attrs, parent) {
    var el = document.createElementNS(NS, tag);
    for (var key in attrs) {
        el.setAttribute(key, attrs[key]);
    }
    parent.appendChild(el);
    return el;
}

function bindCandles(list, color) {
    var box = document.getElementById("candles");
    var wicks = "";
    var bodies = "";
    for (var i = 0; i < list.length; i++) {
        var c = list[i];
        wicks += "M" + c[0] + " " + c[1] + "V" + c[2];
        bodies += "M" + c[0] + " " + c[3] + "V" + c[4];
    }
    make("path", {d: wicks, stroke: color, "stroke-width": 2, fill: "none"}, box);
    make("path", {d: bodies, stroke: color, "stroke-width": 5.5, fill: "none"}, box);
}

function bindBadges() {
    var box = document.getElementById("badges");
    for (var i = 0; i < badges.length; i++) {
        var b = badges[i];
        var isSell = b[0] === "S";
        var cls = isSell ? "bdg-s" : "bdg-b";
        var tipY = isSell ? b[2] + 27 : b[2] - 27;
        var baseY = isSell ? b[2] + 20 : b[2] - 20;
        make("path", {"class": cls, d: "M" + (b[1] - 6) + " " + baseY + "L" + b[1] + " " + tipY + "L" + (b[1] + 6) + " " + baseY + "Z"}, box);
        make("rect", {"class": cls, x: b[1] - 21, y: b[2] - 21, width: 42, height: 42, rx: 9}, box);
        var t = make("text", {"class": "bdg-t", x: b[1], y: b[2] + 11}, box);
        t.textContent = b[0];
    }
}

function bindHist() {
    var up = "";
    var dn = "";
    for (var i = 0; i < hist.length; i++) {
        var x = (4 + 6.69 * i).toFixed(1);
        var v = hist[i];
        if (v > 0) {
            up += "M" + x + " 1988V" + (1988 - v);
        } else if (v < 0) {
            dn += "M" + x + " 1988V" + (1988 - v);
        }
    }
    document.getElementById("histUp").setAttribute("d", up);
    document.getElementById("histDn").setAttribute("d", dn);
}

/* 折线换成圆滑的曲线 */
function smoothLines() {
    var lines = document.querySelectorAll("polyline.ln");
    for (var i = 0; i < lines.length; i++) {
        var pts = lines[i].getAttribute("points").split(" ").map(function (p) {
            return p.split(",").map(Number);
        });
        var d = "M" + pts[0][0] + " " + pts[0][1];
        for (var k = 1; k < pts.length - 1; k++) {
            var mx = (pts[k][0] + pts[k + 1][0]) / 2;
            var my = (pts[k][1] + pts[k + 1][1]) / 2;
            d += "Q" + pts[k][0] + " " + pts[k][1] + " " + mx + " " + my;
        }
        var last = pts[pts.length - 1];
        d += "L" + last[0] + " " + last[1];
        var path = document.createElementNS(NS, "path");
        path.setAttribute("class", lines[i].getAttribute("class"));
        path.setAttribute("d", d);
        lines[i].parentNode.replaceChild(path, lines[i]);
    }
}

bindCandles(greens, "#0cb77f");
bindCandles(reds, "#f0305a");
bindBadges();
bindHist();
smoothLines();
```
